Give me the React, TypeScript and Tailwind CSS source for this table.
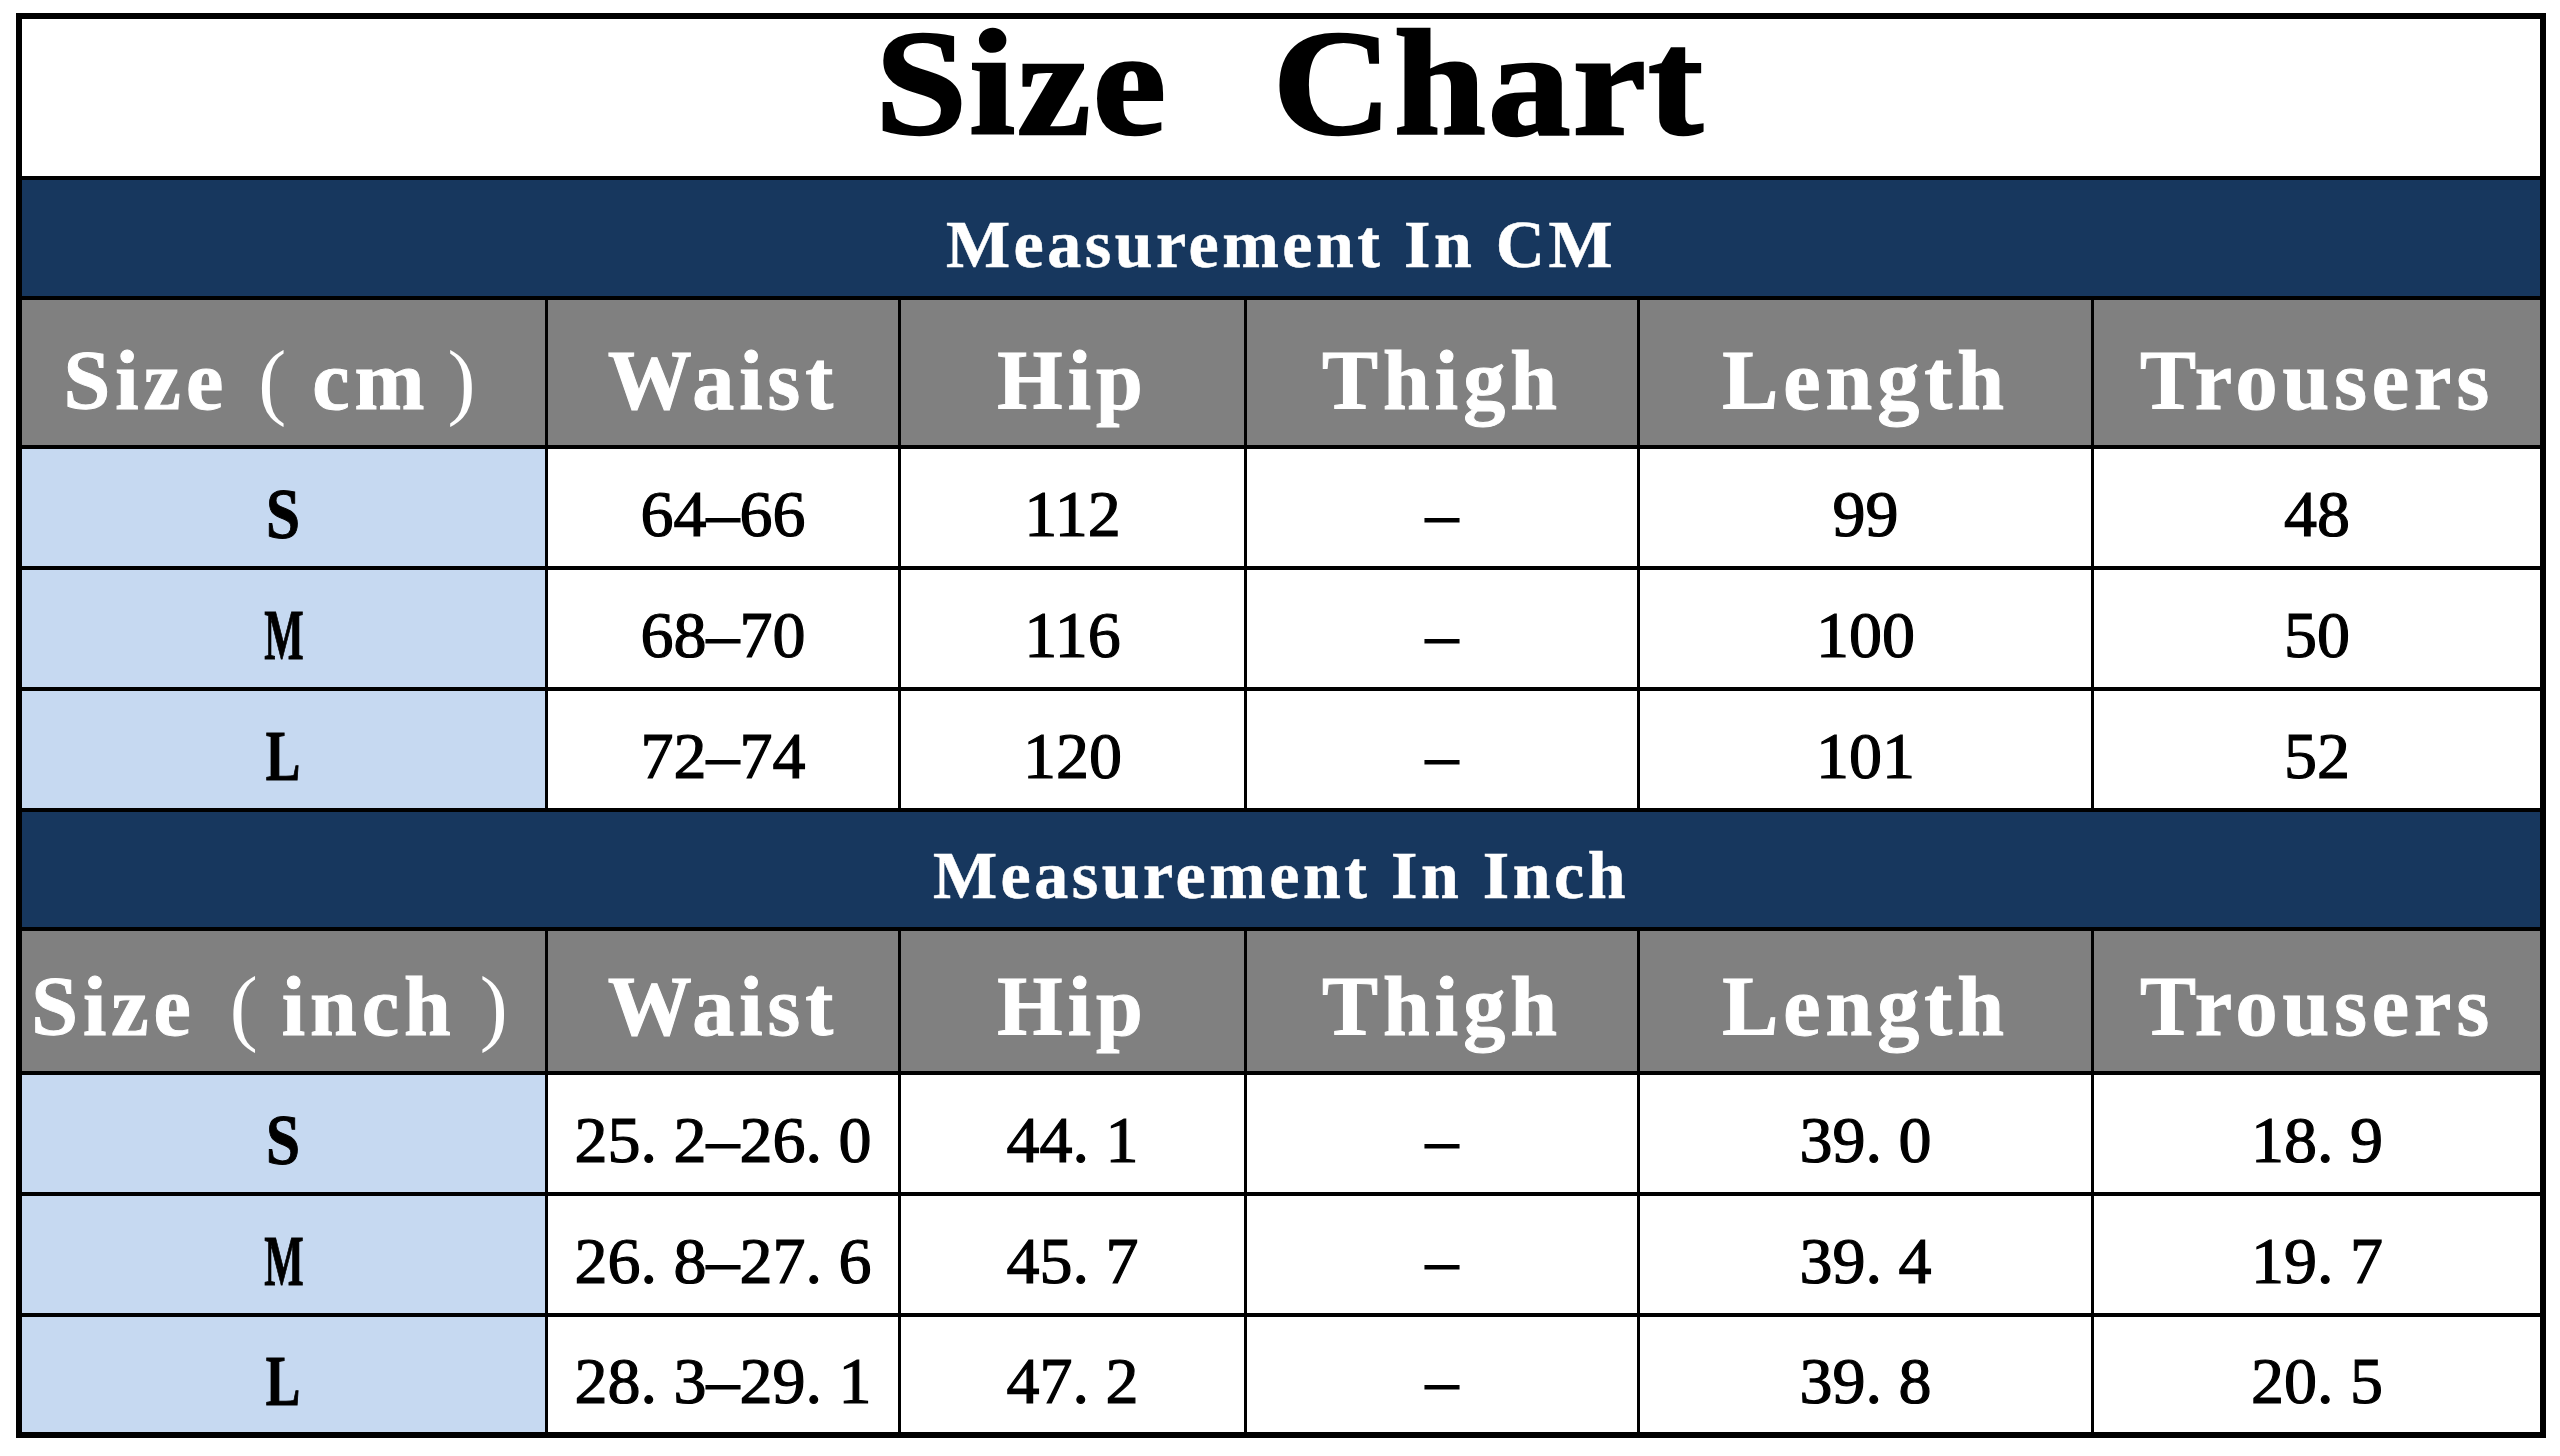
import React from "react";

const GRID = "grid grid-cols-[526px_353px_346px_393px_454px_446px]";

const cmRows = [
  ["S", "64–66", "112", "–", "99", "48"],
  ["M", "68–70", "116", "–", "100", "50"],
  ["L", "72–74", "120", "–", "101", "52"],
];

const inchRows = [
  ["S", "25. 2–26. 0", "44. 1", "–", "39. 0", "18. 9"],
  ["M", "26. 8–27. 6", "45. 7", "–", "39. 4", "19. 7"],
  ["L", "28. 3–29. 1", "47. 2", "–", "39. 8", "20. 5"],
];

const headers = ["Waist", "Hip", "Thigh", "Length", "Trousers"];

const sizeScale: Record<string, string> = {
  S: "scale-x-[0.85]",
  M: "scale-x-[0.58]",
  L: "scale-x-[0.72]",
};

function Band({ text, h, pt }: { text: string; h: string; pt: string }) {
  return (
    <div className={`${h} border-b-4 border-black bg-[#17375e] flex items-center justify-center ${pt}`}>
      <span className="text-white font-bold text-[68px] leading-none tracking-[3.5px] font-['Liberation_Serif',serif] [-webkit-text-stroke:0.5px_#fff]">
        {text}
      </span>
    </div>
  );
}

function HeaderRow({ unit, h, pt, gaps }: { unit: string; h: string; pt: string; gaps: [string, string, string] }) {
  return (
    <div className={`${GRID} ${h} border-b-4 border-black bg-[#808080]`}>
      <div className={`border-r-[3px] border-black flex items-center justify-center pr-[28px] ${pt}`}>
        <span className="flex items-baseline text-white font-bold text-[84px] leading-none tracking-[5px] font-['Liberation_Serif',serif] [-webkit-text-stroke:1px_#fff]">
          <span>Size</span>
          <span className={`font-normal tracking-normal [-webkit-text-stroke:0px_#fff] ${gaps[0]}`}>(</span>
          <span className={gaps[1]}>{unit}</span>
          <span className={`font-normal tracking-normal [-webkit-text-stroke:0px_#fff] ${gaps[2]}`}>)</span>
        </span>
      </div>
      {headers.map((t, i) => (
        <div
          key={t}
          className={`${i < headers.length - 1 ? "border-r-[3px] border-black" : ""} flex items-center justify-center ${pt}`}
        >
          <span className="text-white font-bold text-[84px] leading-none tracking-[5px] font-['Liberation_Serif',serif] [-webkit-text-stroke:1px_#fff]">
            {t}
          </span>
        </div>
      ))}
    </div>
  );
}

function DataRow({ cells, last }: { cells: string[]; last?: boolean }) {
  return (
    <div className={`${GRID} ${last ? "flex-1" : "h-[121px] border-b-4 border-black"} bg-white`}>
      <div className="border-r-[3px] border-black bg-[#c6d9f1] flex items-center justify-center pt-[12px]">
        <span
          className={`inline-block ${sizeScale[cells[0]]} text-black font-bold text-[72px] leading-none font-['Liberation_Serif',serif] [-webkit-text-stroke:1px_#000]`}
        >
          {cells[0]}
        </span>
      </div>
      {cells.slice(1).map((c, i) => (
        <div
          key={i}
          className={`${i < 4 ? "border-r-[3px] border-black" : ""} flex items-center justify-center pt-[12px]`}
        >
          <span className="text-black text-[66px] leading-none whitespace-pre font-['Liberation_Serif',serif] [-webkit-text-stroke:1.2px_#000]">
            {c}
          </span>
        </div>
      ))}
    </div>
  );
}

export default function App() {
  return (
    <div className="w-[2560px] h-[1456px] bg-white pt-[13px] pl-[16px] overflow-hidden">
      <div className="w-[2530px] h-[1425px] border-[6px] border-black flex flex-col">
        <div className="h-[161px] border-b-4 border-black bg-white flex items-start justify-center pl-[18px]">
          <div className="-mt-[19px] flex gap-[95px] scale-x-[1.1] text-black font-bold text-[150px] leading-[166px] tracking-[2px] font-['Liberation_Serif',serif] [-webkit-text-stroke:2.5px_#000]">
            <span>Size</span>
            <span>Chart</span>
          </div>
        </div>
        <Band text="Measurement In CM" h="h-[120px]" pt="pt-[11px]" />
        <HeaderRow unit="cm" h="h-[149px]" pt="pt-[16px]" gaps={["ml-[30px]", "ml-[26px]", "ml-[18px]"]} />
        {cmRows.map((r, i) => (
          <DataRow key={i} cells={r} />
        ))}
        <Band text="Measurement In Inch" h="h-[119px]" pt="pt-[10px]" />
        <HeaderRow unit="inch" h="h-[144px]" pt="pt-[11px]" gaps={["ml-[34px]", "ml-[24px]", "ml-[24px]"]} />
        {inchRows.map((r, i) => (
          <DataRow key={i} cells={r} last={i === inchRows.length - 1} />
        ))}
      </div>
    </div>
  );
}
